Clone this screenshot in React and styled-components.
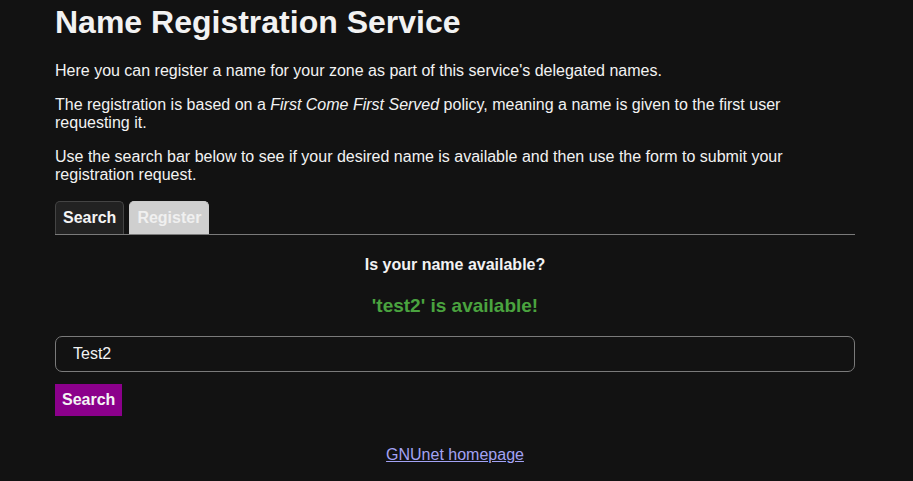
import React, { useState } from "react"
import styled, { createGlobalStyle } from "styled-components"

const GlobalStyle = createGlobalStyle`
  html, body {
    margin: 0;
    background: #121212;
    color: #f2f2f2;
    font-family: "Liberation Sans", Arial, sans-serif;
  }
`

const Page = styled.div`
  width: 800px;
  padding: 4px 0 0 55px;
`

const Title = styled.h1`
  font-size: 32px;
  font-weight: bold;
  margin: 0 0 21px;
  line-height: 37px;
`

const Text = styled.p`
  font-size: 16px;
  line-height: 18px;
  margin: 0 0 16px;
`

const TabBar = styled.div`
  display: flex;
  gap: 5px;
  border-bottom: 1px solid #7a7a7a;
  margin-top: 17px;
`

const Tab = styled.button`
  font-family: inherit;
  font-size: 16px;
  font-weight: bold;
  height: 33px;
  padding: 0 7px;
  border: 1px solid ${props => (props.$active ? "#444" : "#ccc")};
  border-bottom: none;
  border-radius: 5px 5px 0 0;
  background: ${props => (props.$active ? "#222" : "#cfcfcf")};
  color: ${props => (props.$active ? "#f4f4f4" : "#f0f0f0")};
  cursor: pointer;
`

const Panel = styled.div`
  display: flex;
  flex-direction: column;
`

const Question = styled.h4`
  text-align: center;
  font-size: 16px;
  margin: 21px 0 0;
  line-height: 18px;
`

const Result = styled.h3`
  text-align: center;
  font-size: 19px;
  margin: 21px 0 0;
  color: #4aa33f;
  line-height: 22px;
`

const Input = styled.input`
  box-sizing: border-box;
  width: 100%;
  height: 36px;
  margin-top: 19px;
  padding: 0 17px;
  border: 1px solid #7a7a7a;
  border-radius: 7px;
  background: #121212;
  color: #f2f2f2;
  font-family: inherit;
  font-size: 16px;
  outline: none;
`

const SearchButton = styled.button`
  align-self: flex-start;
  margin-top: 12px;
  height: 32px;
  padding: 0 7px;
  border: none;
  background: #8b008b;
  color: #f4f4f4;
  font-family: inherit;
  font-size: 16px;
  font-weight: bold;
  cursor: pointer;
`

const Footer = styled.div`
  text-align: center;
  margin-top: 30px;
  font-size: 16px;
  & a {
    color: #a3a3f5;
  }
`

export default function App() {
  const [tab, setTab] = useState("search")
  const [name, setName] = useState("Test2")
  return (
    <>
      <GlobalStyle />
      <Page>
        <Title>Name Registration Service</Title>
        <Text>
          Here you can register a name for your zone as part of this service's delegated names.
        </Text>
        <Text>
          The registration is based on a <em>First Come First Served</em> policy, meaning a name is
          given to the first user requesting it.
        </Text>
        <Text>
          Use the search bar below to see if your desired name is available and then use the form to
          submit your registration request.
        </Text>
        <TabBar>
          <Tab $active={tab === "search"} onClick={() => setTab("search")}>Search</Tab>
          <Tab $active={tab === "register"} onClick={() => setTab("register")}>Register</Tab>
        </TabBar>
        <Panel>
          <Question>Is your name available?</Question>
          <Result>'test2' is available!</Result>
          <Input value={name} onChange={e => setName(e.target.value)} />
          <SearchButton>Search</SearchButton>
        </Panel>
        <Footer>
          <a href="#">GNUnet homepage</a>
        </Footer>
      </Page>
    </>
  )
}
